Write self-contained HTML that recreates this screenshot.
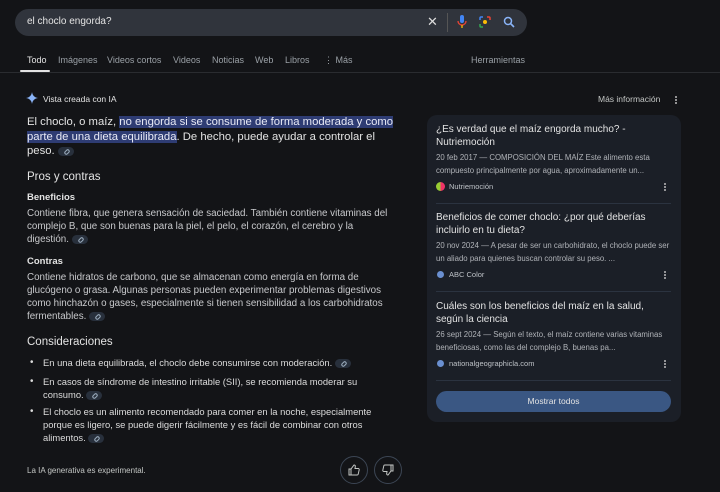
<!DOCTYPE html>
<html><head><meta charset="utf-8"><style>
*{margin:0;padding:0;box-sizing:border-box}
body{width:720px;height:492px;background:#131417;font-family:"Liberation Sans",sans-serif;color:#e3e3e3;position:relative;overflow:hidden}
.a{position:absolute;white-space:nowrap}
.search{left:15px;top:9px;width:512px;height:27px;border-radius:14px;background:#30343c}
.tabs span{position:absolute;top:55px;font-size:9px;color:#9aa0a6}
.p{font-size:9.8px;line-height:13px;color:#c8c9cc;white-space:normal}
.lk{display:inline-block;width:16px;height:9px;border-radius:5px;background:#28303c;vertical-align:middle;position:relative}
.lk:after{content:"";position:absolute;left:6px;top:3px;width:4px;height:2px;border:1px solid #9ab;border-radius:2px;transform:rotate(-45deg)}
.card{left:427px;top:115px;width:254px;height:307px;border-radius:10px;background:#1b1f27}
.ct{font-size:10px;line-height:12.5px;color:#e3e3e3;white-space:normal;width:230px}
.cs{font-size:7.8px;line-height:13px;color:#b0b3b8;white-space:normal;width:236px}
.src{font-size:7.5px;color:#bdc1c6}
.dot{position:absolute;width:2px;height:2px;background:#bbb;border-radius:1px;box-shadow:0 3px 0 #bbb,0 6px 0 #bbb}
.hl{background:#2e3c73;color:#e8eaf6}
.th{width:28px;height:28px;border-radius:50%;border:1px solid #3c4654}
</style></head><body>
<div class="a search"></div>
<div class="a" style="left:27px;top:16px;font-size:10px;color:#e3e3e3">el choclo engorda?</div>
<div class="a" style="left:427px;top:14px;font-size:13px;color:#ddd">✕</div>
<div class="a" style="left:447px;top:13px;width:1px;height:19px;background:#555"></div>
<svg class="a" style="left:457px;top:15px" width="10" height="14" viewBox="0 0 10 14"><rect x="3" y="0" width="4" height="8" rx="2" fill="#4285f4"/><path d="M1 6a4 4 0 0 0 8 0" stroke="#ea4335" fill="none" stroke-width="1.3"/><path d="M5 10v3" stroke="#fbbc05" stroke-width="1.3"/></svg>
<svg class="a" style="left:479px;top:16px" width="12" height="12" viewBox="0 0 12 12"><path d="M1 4V2a1 1 0 0 1 1-1h2" stroke="#4285f4" fill="none" stroke-width="1.5"/><path d="M8 1h2a1 1 0 0 1 1 1v2" stroke="#ea4335" fill="none" stroke-width="1.5"/><path d="M1 8v2a1 1 0 0 0 1 1h2" stroke="#34a853" fill="none" stroke-width="1.5"/><circle cx="6" cy="6" r="2" fill="#fbbc05"/></svg>
<svg class="a" style="left:503px;top:16px" width="12" height="12" viewBox="0 0 12 12"><circle cx="5" cy="5" r="3.5" stroke="#8ab4f8" fill="none" stroke-width="1.5"/><path d="M7.5 7.5l3.5 3.5" stroke="#8ab4f8" stroke-width="1.6"/></svg>
<div class="tabs">
<span style="left:27px;color:#e3e3e3">Todo</span><span style="left:58px">Imágenes</span><span style="left:107px">Videos cortos</span><span style="left:173px">Videos</span><span style="left:212px">Noticias</span><span style="left:255px">Web</span><span style="left:285px">Libros</span><span style="left:324px">⋮ Más</span><span style="left:471px">Herramientas</span>
</div>
<div class="a" style="left:20px;top:70px;width:30px;height:2px;background:#e3e3e3;border-radius:1px"></div>
<div class="a" style="left:0;top:72px;width:720px;height:1px;background:#2a2c30"></div>
<svg class="a" style="left:26px;top:92px" width="12" height="12" viewBox="0 0 12 12"><path d="M6 0C6.5 3.5 8.5 5.5 12 6 8.5 6.5 6.5 8.5 6 12 5.5 8.5 3.5 6.5 0 6 3.5 5.5 5.5 3.5 6 0Z" fill="#8ab4f8"/></svg>
<div class="a" style="left:43px;top:94px;font-size:8.5px;color:#e3e3e3">Vista creada con IA</div>
<div class="a" style="left:598px;top:94px;font-size:8.5px;color:#c4c7c5">Más información</div>
<div class="dot" style="left:675px;top:96px"></div>
<div class="a" style="left:27px;top:115px;width:375px;font-size:11.3px;line-height:14.5px;white-space:normal;color:#e3e3e3">El choclo, o maíz, <span class="hl">no engorda si se consume de forma moderada y como parte de una dieta equilibrada</span>. De hecho, puede ayudar a controlar el peso. <span class="lk"></span></div>
<div class="a" style="left:27px;top:171px;font-size:11.5px;color:#e3e3e3">Pros y contras</div>
<div class="a" style="left:27px;top:192px;font-size:9.5px;font-weight:bold">Beneficios</div>
<div class="a p" style="left:27px;top:207px;width:368px">Contiene fibra, que genera sensación de saciedad. También contiene vitaminas del complejo B, que son buenas para la piel, el pelo, el corazón, el cerebro y la digestión. <span class="lk"></span></div>
<div class="a" style="left:27px;top:256px;font-size:9.5px;font-weight:bold">Contras</div>
<div class="a p" style="left:27px;top:271px;width:368px">Contiene hidratos de carbono, que se almacenan como energía en forma de glucógeno o grasa. Algunas personas pueden experimentar problemas digestivos como hinchazón o gases, especialmente si tienen sensibilidad a los carbohidratos fermentables. <span class="lk"></span></div>
<div class="a" style="left:27px;top:336px;font-size:11.5px;color:#e3e3e3">Consideraciones</div>
<div class="a p" style="left:30px;top:356px;color:#dcdcdc">•</div><div class="a p" style="left:43px;top:356px;width:345px;color:#dcdcdc;font-size:9.4px">En una dieta equilibrada, el choclo debe consumirse con moderación. <span class="lk"></span></div>
<div class="a p" style="left:30px;top:375px;color:#dcdcdc">•</div><div class="a p" style="left:43px;top:375px;width:330px;color:#dcdcdc;font-size:9.4px">En casos de síndrome de intestino irritable (SII), se recomienda moderar su consumo. <span class="lk"></span></div>
<div class="a p" style="left:30px;top:405px;color:#dcdcdc">•</div><div class="a p" style="left:43px;top:405px;width:348px;color:#dcdcdc;font-size:9.4px">El choclo es un alimento recomendado para comer en la noche, especialmente porque es ligero, se puede digerir fácilmente y es fácil de combinar con otros alimentos. <span class="lk"></span></div>
<div class="a" style="left:27px;top:466px;font-size:8px;color:#c4c7c5">La IA generativa es experimental.</div>
<div class="a th" style="left:340px;top:456px"></div>
<svg class="a" style="left:348px;top:464px" width="12" height="12" viewBox="0 0 12 12"><path d="M1 5h2v6H1zM3 5l3-4c1 0 1.5.6 1.3 1.6L7 4.5h3.2c.7 0 1.1.6 1 1.2l-1 4.5c-.1.5-.5.8-1 .8H3" fill="none" stroke="#c4c7c5" stroke-width="1"/></svg>
<div class="a th" style="left:374px;top:456px"></div>
<svg class="a" style="left:382px;top:464px" width="12" height="12" viewBox="0 0 12 12"><g transform="rotate(180 6 6)"><path d="M1 5h2v6H1zM3 5l3-4c1 0 1.5.6 1.3 1.6L7 4.5h3.2c.7 0 1.1.6 1 1.2l-1 4.5c-.1.5-.5.8-1 .8H3" fill="none" stroke="#c4c7c5" stroke-width="1"/></g></svg>
<div class="a card"></div>
<div class="a ct" style="left:436px;top:124px">¿Es verdad que el maíz engorda mucho? - Nutriemoción</div>
<div class="a cs" style="left:436px;top:151px">20 feb 2017 — COMPOSICIÓN DEL MAÍZ Este alimento esta compuesto principalmente por agua, aproximadamente un...</div>
<div class="a" style="left:436px;top:182px;width:9px;height:9px;border-radius:50%;background:linear-gradient(90deg,#9c3 50%,#e36 50%)"></div>
<div class="a src" style="left:449px;top:182px">Nutriemoción</div><div class="dot" style="left:664px;top:183px"></div>
<div class="a" style="left:436px;top:203px;width:235px;height:1px;background:#2b3340"></div>
<div class="a ct" style="left:436px;top:212px">Beneficios de comer choclo: ¿por qué deberías incluirlo en tu dieta?</div>
<div class="a cs" style="left:436px;top:239px">20 nov 2024 — A pesar de ser un carbohidrato, el choclo puede ser un aliado para quienes buscan controlar su peso. ...</div>
<div class="a" style="left:437px;top:271px;width:7px;height:7px;border-radius:50%;background:#6a8fd0"></div>
<div class="a src" style="left:449px;top:270px">ABC Color</div><div class="dot" style="left:664px;top:271px"></div>
<div class="a" style="left:436px;top:291px;width:235px;height:1px;background:#2b3340"></div>
<div class="a ct" style="left:436px;top:301px">Cuáles son los beneficios del maíz en la salud, según la ciencia</div>
<div class="a cs" style="left:436px;top:328px">26 sept 2024 — Según el texto, el maíz contiene varias vitaminas beneficiosas, como las del complejo B, buenas pa...</div>
<div class="a" style="left:437px;top:360px;width:7px;height:7px;border-radius:50%;background:#6a8fd0"></div>
<div class="a src" style="left:449px;top:359px">nationalgeographicla.com</div><div class="dot" style="left:664px;top:360px"></div>
<div class="a" style="left:436px;top:380px;width:235px;height:1px;background:#2b3340"></div>
<div class="a" style="left:436px;top:391px;width:235px;height:21px;border-radius:11px;background:#3a5783;text-align:center;line-height:21px;font-size:8.5px;color:#e3e3e3">Mostrar todos</div>
</body></html>
